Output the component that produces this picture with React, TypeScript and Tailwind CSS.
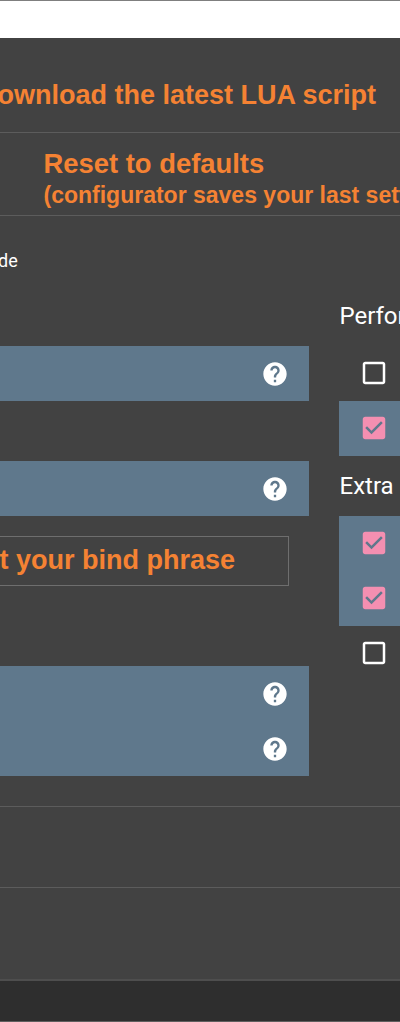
const HELP = "M12 2C6.48 2 2 6.48 2 12s4.48 10 10 10 10-4.48 10-10S17.52 2 12 2zm1 17h-2v-2h2v2zm2.07-7.75l-.9.92C13.45 12.9 13 13.5 13 15h-2v-.5c0-1.1.45-2.1 1.17-2.83l1.24-1.26c.37-.36.59-.86.59-1.41 0-1.1-.9-2-2-2s-2 .9-2 2H8c0-2.21 1.79-4 4-4s4 1.79 4 4c0 .88-.36 1.68-.93 2.25z";
const CHECKED = "M19 3H5c-1.11 0-2 .9-2 2v14c0 1.1.89 2 2 2h14c1.1 0 2-.9 2-2V5c0-1.1-.89-2-2-2zm-9 14l-5-5 1.41-1.41L10 14.17l7.59-7.59L19 8l-9 9z";
const UNCHECKED = "M19 5v14H5V5h14m0-2H5c-1.1 0-2 .9-2 2v14c0 1.1.9 2 2 2h14c1.1 0 2-.9 2-2V5c0-1.1-.9-2-2-2z";

function HelpRow() {
  return (
    <div className="flex h-[55px] items-center justify-end pr-5">
      <svg viewBox="0 0 24 24" className="h-7 w-7 fill-white">
        <path d={HELP} />
      </svg>
    </div>
  );
}

function Check({ on, label }: { on?: boolean; label: string }) {
  return (
    <div className="flex h-[55px] items-center gap-3 pb-[2px] pl-5">
      <svg viewBox="0 0 24 24" className={on ? "h-[30px] w-[30px] fill-[#f48fb1]" : "h-[30px] w-[30px] fill-white"}>
        <path d={on ? CHECKED : UNCHECKED} />
      </svg>
      <span className="whitespace-nowrap text-lg text-white">{label}</span>
    </div>
  );
}

export default function App() {
  return (
    <div className="flex h-[1022px] w-[400px] flex-col overflow-hidden bg-white font-['Roboto',sans-serif]">
      <div className="h-[38px] shrink-0 border-t border-[#7f7f7f] bg-white" />
      <div className="flex h-[943px] shrink-0 flex-col bg-[#424242]">
        <div className="flex h-[95px] shrink-0 items-center justify-end border-b border-[#5c5c5c] pr-[24px] pt-[20px]">
          <span className="whitespace-nowrap font-['Liberation_Sans',sans-serif] text-[27px] font-bold text-[#f58233]">Download the latest LUA script</span>
        </div>
        <div className="flex h-[83px] shrink-0 flex-col justify-center overflow-hidden border-b border-[#5c5c5c] pl-[43.5px] pt-[9px] font-['Liberation_Sans',sans-serif] font-bold text-[#f58233]">
          <span className="whitespace-nowrap text-[27.4px] leading-[31px]">Reset to defaults</span>
          <span className="mt-[3px] whitespace-nowrap text-[23px] leading-[27px]">(configurator saves your last settings)</span>
        </div>
        <div className="flex h-[590px] shrink-0">
          <div className="w-[309px] shrink-0">
            <div className="-ml-[2px] flex h-[90px] justify-start pt-[33px]">
              <span className="text-lg leading-6 text-white">de</span>
            </div>
            <div className="mt-[40px] bg-[#5f788c]"><HelpRow /></div>
            <div className="mt-[60px] bg-[#5f788c]"><HelpRow /></div>
            <div className="-ml-10 mt-5 mr-5 flex h-[50px] items-center justify-end border border-[#6e6e6e] pb-[2px] pr-[53px]">
              <span className="whitespace-nowrap font-['Liberation_Sans',sans-serif] text-[27px] font-bold text-[#f58233]">Set your bind phrase</span>
            </div>
            <div className="mt-[80px] bg-[#5f788c]"><HelpRow /><HelpRow /></div>
          </div>
          <div className="ml-[30px] w-[300px] shrink-0 pl-[0.5px]">
            <div className="pt-[84px] text-2xl leading-8 text-white">Performance</div>
            <div className="-ml-[0.5px] mt-[14px]"><Check label="Unlock higher" /></div>
            <div className="-ml-[0.5px] bg-[#5f788c]"><Check on label="Enable" /></div>
            <div className="py-[14px] text-2xl leading-[32px] text-white">Extra</div>
            <div className="-ml-[0.5px] bg-[#5f788c]"><Check on label="Enable" /><Check on label="Enable" /></div>
            <div className="-ml-[0.5px]"><Check label="Enable" /></div>
          </div>
        </div>
        <div className="h-[81px] shrink-0 border-t border-[#5c5c5c]" />
        <div className="flex-1 border-t border-b-2 border-t-[#5c5c5c] border-b-[#4e4e4e]" />
      </div>
      <div className="h-[41px] shrink-0 border-b border-[#5f5f5f] bg-[#2e2e2e]" />
    </div>
  );
}
